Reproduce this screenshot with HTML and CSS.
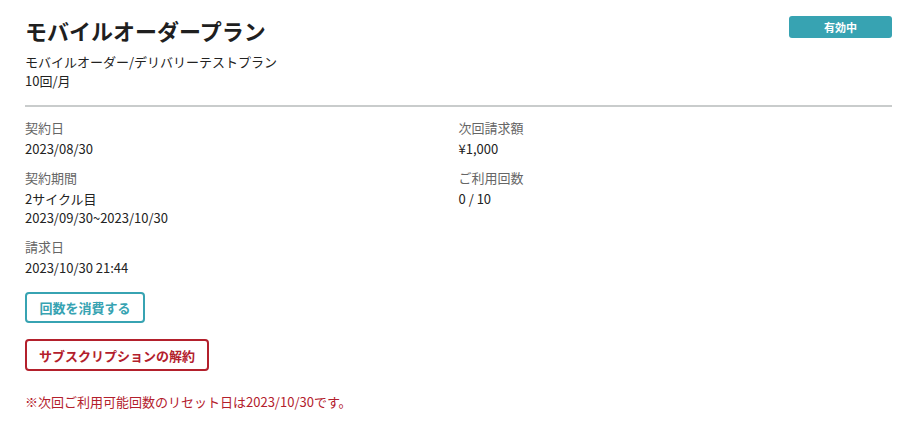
FILE: index.html
```html
<!DOCTYPE html>
<html lang="ja">
    <head>
        <meta charset="utf-8">
        <title>モバイルオーダープラン</title>
        <link rel="stylesheet" href="styles.css">
    </head>
    <body>
        <div class="plan">
            <div class="plan-head">
                <h1 class="plan-title">モバイルオーダープラン</h1>
                <span class="badge">有効中</span>
            </div>
            <div class="plan-desc">
                <div>モバイルオーダー/デリバリーテストプラン</div>
                <div>10回/月</div>
            </div>
            <hr class="divider">
            <div class="details">
                <div class="col">
                    <div class="item">
                        <div class="label">契約日</div>
                        <div class="value">2023/08/30</div>
                    </div>
                    <div class="item">
                        <div class="label">契約期間</div>
                        <div class="value">2サイクル目</div>
                        <div class="value">2023/09/30~2023/10/30</div>
                    </div>
                    <div class="item">
                        <div class="label">請求日</div>
                        <div class="value">2023/10/30 21:44</div>
                    </div>
                </div>
                <div class="col">
                    <div class="item">
                        <div class="label">次回請求額</div>
                        <div class="value">¥1,000</div>
                    </div>
                    <div class="item">
                        <div class="label">ご利用回数</div>
                        <div class="value">0 / 10</div>
                    </div>
                </div>
            </div>
            <div class="actions">
                <button class="btn btn-use">回数を消費する</button>
                <button class="btn btn-cancel">サブスクリプションの解約</button>
            </div>
            <p class="note">※次回ご利用可能回数のリセット日は2023/10/30です。</p>
        </div>
    </body>
</html>
```

FILE: styles.css
```css
body {
    margin: 0;
    padding: 0;
    background: #fff;
    color: #222;
    font-family: "Noto Sans CJK JP", "Noto Sans", sans-serif;
    font-size: 13px;
    line-height: 19px;
}
.plan {
    padding: 14px 28px 0 25px;
}
.plan-head {
    display: flex;
    justify-content: space-between;
    align-items: flex-start;
}
.plan-title {
    margin: 0;
    font-size: 22px;
    line-height: 32px;
    font-weight: bold;
    color: #1f1f1f;
}
.badge {
    margin-top: 2px;
    width: 103px;
    height: 22px;
    line-height: 22px;
    text-align: center;
    background: #37a3b2;
    color: #fff;
    font-size: 11px;
    font-weight: bold;
    border-radius: 3px;
}
.plan-desc {
    margin-top: 6px;
}
.divider {
    margin: 15px 0 11px;
    border: 0;
    border-top: 2px solid #c9cccc;
}
.details {
    display: grid;
    grid-template-columns: 1fr 1fr;
}
.col {
    display: flex;
    flex-direction: column;
    gap: 10px;
}
.label {
    color: #666;
    margin-bottom: 2px;
}
.actions {
    margin-top: 15px;
    display: flex;
    flex-direction: column;
    align-items: flex-start;
    gap: 16px;
}
.btn {
    box-sizing: border-box;
    height: 31px;
    padding: 0;
    background: #fff;
    border: 2px solid;
    border-radius: 4px;
    font-family: inherit;
    font-size: 13px;
    font-weight: bold;
    white-space: nowrap;
}
.btn-use {
    width: 120px;
    color: #37a3b2;
    border-color: #37a3b2;
}
.btn-cancel {
    width: 184px;
    height: 32px;
    color: #b3202c;
    border-color: #b3202c;
}
.note {
    margin: 21px 0 0;
    color: #b3202c;
}
```
